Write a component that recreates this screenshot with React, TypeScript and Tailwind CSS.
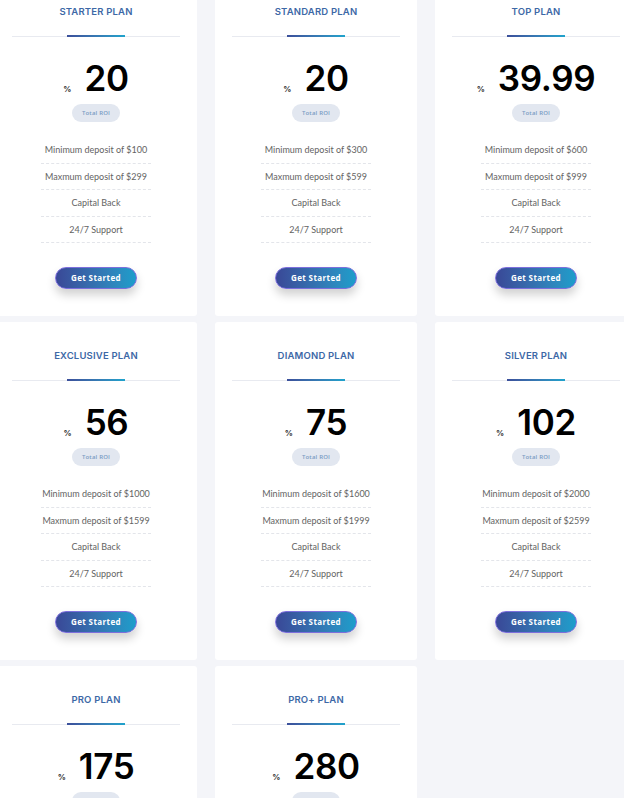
import React from 'react';

interface Plan {
  name: string;
  roi: string;
  min?: string;
  max?: string;
}

const plans: Plan[] = [
  { name: 'STARTER PLAN', roi: '20', min: '$100', max: '$299' },
  { name: 'STANDARD PLAN', roi: '20', min: '$300', max: '$599' },
  { name: 'TOP PLAN', roi: '39.99', min: '$600', max: '$999' },
  { name: 'EXCLUSIVE PLAN', roi: '56', min: '$1000', max: '$1599' },
  { name: 'DIAMOND PLAN', roi: '75', min: '$1600', max: '$1999' },
  { name: 'SILVER PLAN', roi: '102', min: '$2000', max: '$2599' },
  { name: 'PRO PLAN', roi: '175', min: '$2600', max: '$2999' },
  { name: 'PRO+ PLAN', roi: '280', min: '$3000', max: '$3999' },
];

const PlanCard: React.FC<{ plan: Plan }> = ({ plan }) => {
  const features = [
    `Minimum deposit of ${plan.min}`,
    `Maxmum deposit of ${plan.max}`,
    'Capital Back',
    '24/7 Support',
  ];

  return (
    <div className="bg-white rounded-[3px] h-[338px] flex flex-col items-center pt-[28px] px-[17px]">
      <h3 className="text-[9.5px] leading-[12px] font-semibold tracking-[0.02em] text-[#3d68a6] font-['Inter',sans-serif]">
        {plan.name}
      </h3>

      {/* divider with accent */}
      <div className="relative w-full h-px bg-[#e8eaf0] mt-[18px]">
        <div className="absolute left-1/2 -translate-x-1/2 -top-px w-[58px] h-[2px] bg-gradient-to-r from-[#3b4f9a] to-[#1ea3cc]" />
      </div>

      {/* ROI number */}
      <div className="flex items-end mt-[24px] font-['Inter',sans-serif]">
        <span className="text-[8px] font-bold text-[#333] mr-[13px] mb-[3px] leading-none">%</span>
        <span className="text-[35px] leading-none font-semibold text-black tracking-[-0.01em]">{plan.roi}</span>
      </div>

      <div className="mt-[8px] w-[48px] h-[18px] rounded-full bg-[#e2e7f0] flex items-center justify-center">
        <span className="text-[6px] font-semibold text-[#7a9cc4] font-['Open_Sans',sans-serif] tracking-[0.03em]">Total ROI</span>
      </div>

      {/* features */}
      <ul className="mt-[15px] w-[110px] flex flex-col font-['Lato',sans-serif]">
        {features.map((f) => (
          <li
            key={f}
            className="h-[26.5px] border-b border-dashed border-[#e3e5ea] flex items-center justify-center text-[9px] text-[#636363] whitespace-nowrap"
          >
            {f}
          </li>
        ))}
      </ul>

      <button className="mt-[24px] w-[82px] h-[22px] rounded-full border border-[#7d6fdc] bg-gradient-to-r from-[#394897] to-[#1b9ecb] text-white text-[8px] font-bold tracking-[0.05em] font-['Open_Sans',sans-serif] shadow-[0_6px_10px_rgba(0,0,0,0.18)]">
        Get Started
      </button>
    </div>
  );
};

export default function App() {
  return (
    <div className="w-[624px] h-[798px] overflow-hidden bg-[#f4f5f9]">
      <div className="grid grid-cols-[202px_202px_202px] gap-x-[18px] gap-y-[6px] ml-[-5px] mt-[-22px]">
        {plans.map((p) => (
          <PlanCard key={p.name} plan={p} />
        ))}
      </div>
    </div>
  );
}
